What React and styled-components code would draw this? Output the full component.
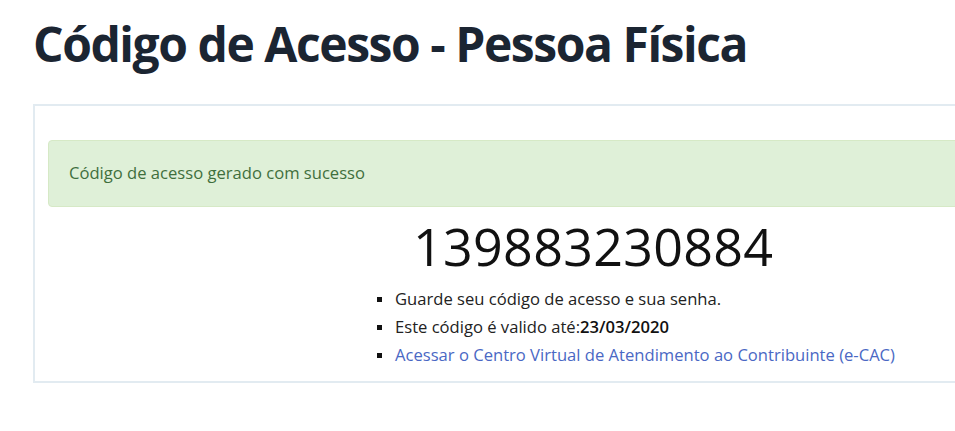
import React from 'react'
import styled, { createGlobalStyle } from 'styled-components'

const GlobalStyle = createGlobalStyle`
  html, body {
    margin: 0;
    padding: 0;
    background: #fff;
    overflow: hidden;
  }
  body {
    font-family: "Open Sans", "Noto Sans", sans-serif;
    color: #222;
  }
`;

const Page = styled.div`
  width: 955px;
  height: 431px;
  padding: 14px 0 0 33px;
  box-sizing: border-box;
  overflow: hidden;
`;

const Title = styled.h1`
  margin: 0;
  font-size: 48px;
  font-weight: 700;
  line-height: 60px;
  color: #1b2532;
  letter-spacing: -1.45px;
  white-space: nowrap;
`;

const Panel = styled.div`
  margin-top: 30px;
  width: 960px;
  height: 279px;
  box-sizing: border-box;
  border: 2px solid #e2ebf1;
  border-right: none;
  padding: 34px 0 0 13px;
`;

const Alert = styled.div`
  height: 67px;
  box-sizing: border-box;
  background: #dff0d8;
  border: 1px solid #d6e9c6;
  border-radius: 4px;
  color: #3f6f3d;
  font-size: 16.6px;
  display: flex;
  align-items: center;
  padding: 0 0 2px 20px;
`;

const Result = styled.div`
  padding-left: 329px;
`;

const Code = styled.div`
  font-size: 52px;
  line-height: 62px;
  margin: 8px 0 0 36px;
  color: #111;
  letter-spacing: 0.3px;
`;

const Notes = styled.ul`
  list-style: none;
  margin: 8px 0 0;
  padding: 0;
  font-size: 16.6px;
  line-height: 28px;
`;

const Note = styled.li`
  display: flex;
  align-items: center;
  white-space: nowrap;
  color: ${p => (p.$link ? '#4a68c4' : '#222')};
  &::before {
    content: '';
    width: 5px;
    height: 5px;
    margin-right: 13px;
    background: #111;
    flex: none;
  }
`;

const Strong = styled.b`
  font-weight: 600;
  color: #111;
`;

export default function App() {
  return (
    <>
      <GlobalStyle />
      <Page>
        <Title>Código de Acesso - Pessoa Física</Title>
        <Panel>
          <Alert>Código de acesso gerado com sucesso</Alert>
          <Result>
            <Code>139883230884</Code>
            <Notes>
              <Note>Guarde seu código de acesso e sua senha.</Note>
              <Note>Este código é valido até:<Strong>23/03/2020</Strong></Note>
              <Note $link>Acessar o Centro Virtual de Atendimento ao Contribuinte (e-CAC)</Note>
            </Notes>
          </Result>
        </Panel>
      </Page>
    </>
  )
}
